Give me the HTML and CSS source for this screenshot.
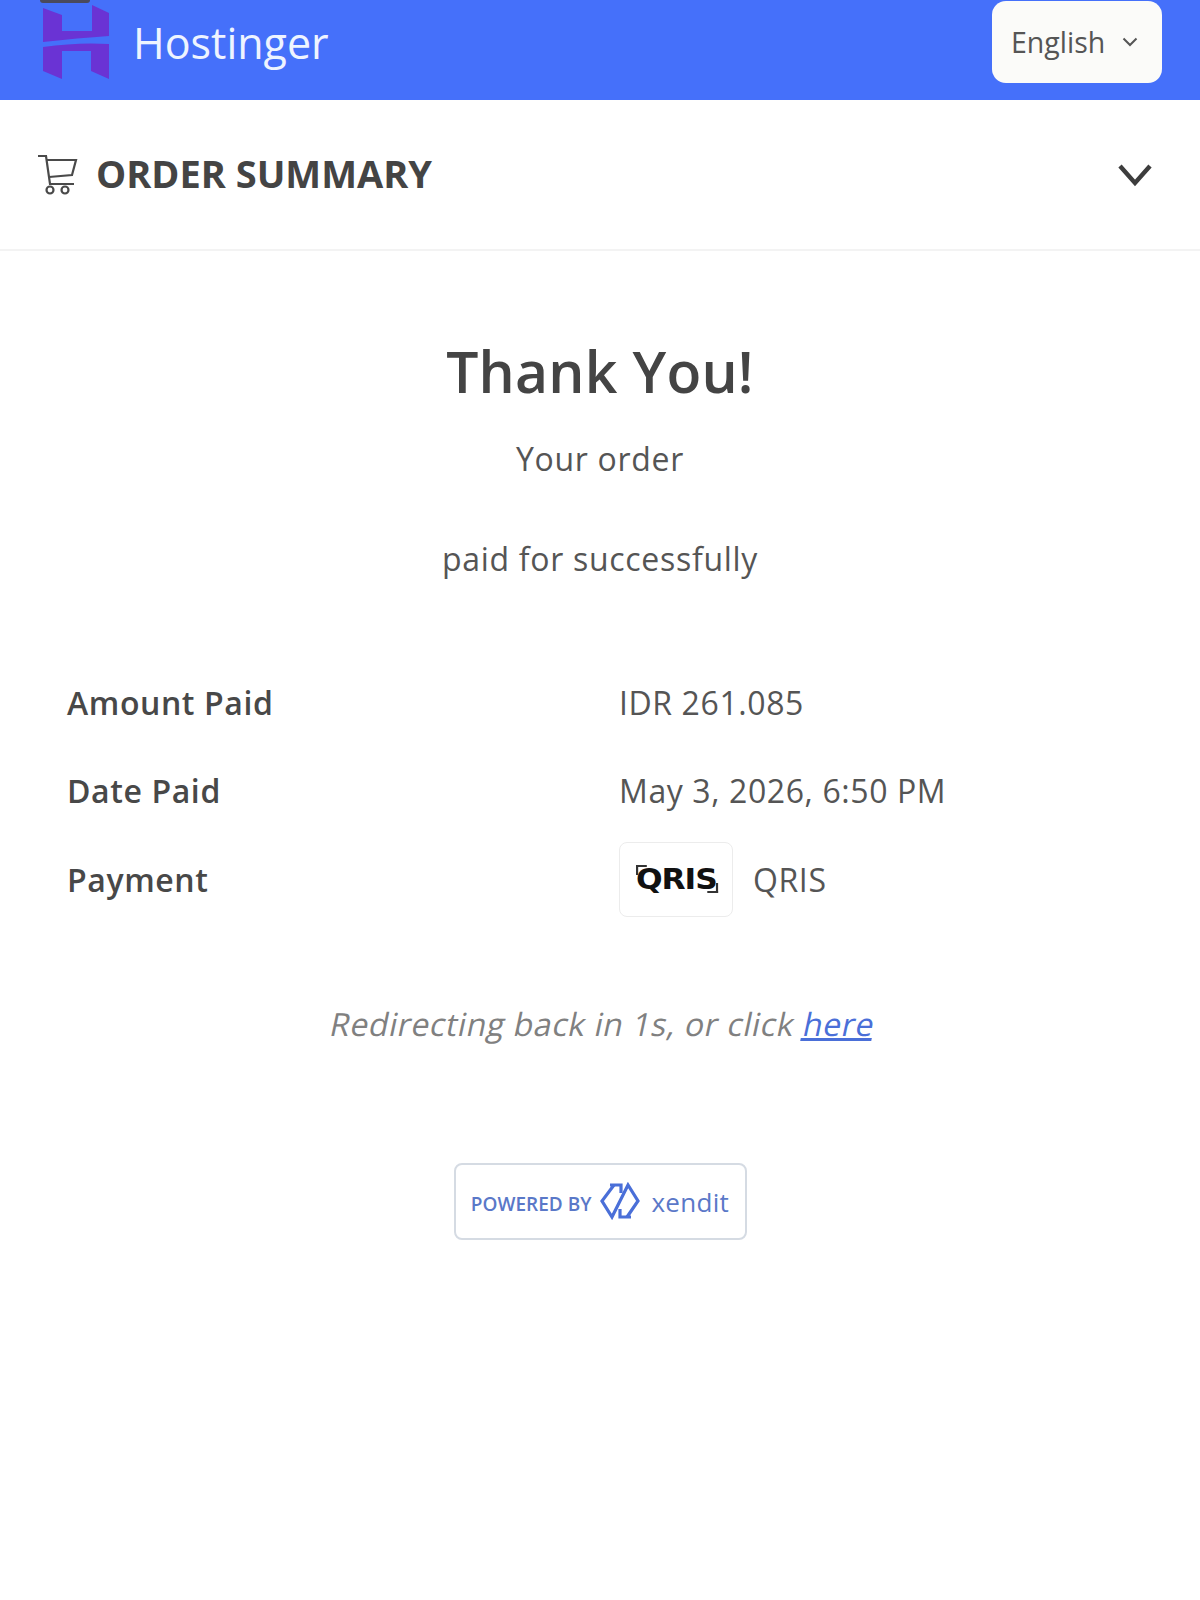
FILE: index.html
```html
<!DOCTYPE html>
<html lang="en">
<head>
    <meta charset="UTF-8">
    <meta name="viewport" content="width=device-width, initial-scale=1.0">
    <title>Thank You</title>
    <link rel="stylesheet" href="styles.css">
</head>
<body>
    <div class="header">
        <div class="camera-dot"></div>
        <div class="brand">
            <svg class="brand-logo" viewBox="0 0 66 74" width="66" height="74">
                <path d="M0 3 L19 10 V26 H49 V0 L66 8 V31 Q35 33 0 37 Z" fill="#6a33d4"/>
                <path d="M0 42 Q35 37 66 39 V74 L48 66 V46 H19 V74 L0 66 Z" fill="#6a33d4"/>
            </svg>
            <span class="brand-name">Hostinger</span>
        </div>
        <div class="lang-select">
            <span>English</span>
            <svg viewBox="0 0 16 10" width="16" height="10">
                <path d="M1.5 1.5 L8 8 L14.5 1.5" fill="none" stroke="#555" stroke-width="2"/>
            </svg>
        </div>
    </div>

    <div class="summary-bar">
        <div class="summary-title">
            <svg class="cart-icon" viewBox="0 0 40 40" width="40" height="40">
                <g fill="none" stroke="#4a4a4a" stroke-width="2.2">
                    <path d="M0 1 H8 L12 29 H36"/>
                    <path d="M8 5 H38 L34 20 L11 22"/>
                    <circle cx="12" cy="35" r="3.5"/>
                    <circle cx="27" cy="35" r="3.5"/>
                </g>
            </svg>
            <span>ORDER SUMMARY</span>
        </div>
        <svg viewBox="0 0 34 24" width="34" height="24">
            <path d="M2 3 L17 20 L32 3" fill="none" stroke="#3d3d3d" stroke-width="4.4"/>
        </svg>
    </div>

    <div class="content">
        <h1>Thank You!</h1>
        <p class="status">Your order</p>
        <p class="status">paid for successfully</p>

        <div class="details">
            <div class="detail-label">Amount Paid</div>
            <div class="detail-value">IDR 261.085</div>
            <div class="detail-label">Date Paid</div>
            <div class="detail-value">May 3, 2026, 6:50 PM</div>
            <div class="detail-label">Payment</div>
            <div class="detail-value payment">
                <div class="qris-box"><span class="qris-logo">QRIS</span></div>
                <span>QRIS</span>
            </div>
        </div>

        <p class="redirect">Redirecting back in 1s, or click <a href="#">here</a></p>

        <div class="powered">
            <span class="powered-by">POWERED BY</span>
            <svg viewBox="0 0 40 38" width="40" height="38">
                <g fill="none" stroke="#4a6fd8" stroke-width="3.2">
                    <path d="M14 3 L2 19 L12 35 L28 3 L38 19 L27 35"/>
                    <path d="M10 3 H21 V11"/>
                    <path d="M31 35 H20 V27"/>
                </g>
            </svg>
            <span class="xendit">xendit</span>
        </div>
    </div>
</body>
</html>
```

FILE: styles.css
```css
* {
    margin: 0;
    padding: 0;
    box-sizing: border-box;
}

body {
    font-family: 'Open Sans', 'Liberation Sans', sans-serif;
    background: #ffffff;
    color: #444444;
    min-height: 100vh;
}

.header {
    position: relative;
    height: 100px;
    background: #4570fa;
    display: flex;
    align-items: center;
    justify-content: space-between;
    padding: 0 38px 16px 43px;
}

.camera-dot {
    position: absolute;
    top: 0;
    left: 40px;
    width: 50px;
    height: 3px;
    border-radius: 0 0 6px 6px;
    background: #4a4a5c;
}

.brand {
    display: flex;
    align-items: center;
    gap: 24px;
}

.brand-name {
    font-size: 43px;
    color: #eef4ff;
}

.lang-select {
    width: 170px;
    height: 82px;
    background: #fbfbf9;
    border-radius: 14px;
    display: flex;
    align-items: center;
    justify-content: space-between;
    padding: 0 24px 0 19px;
    font-size: 28.5px;
    color: #555555;
}

.summary-bar {
    height: 151px;
    border-bottom: 2px solid #f3f3f3;
    display: flex;
    align-items: center;
    justify-content: space-between;
    padding: 0 48px 0 38px;
}

.summary-title {
    display: flex;
    align-items: center;
    gap: 18px;
    font-size: 38px;
    font-weight: 700;
    color: #444444;
}

.summary-title span {
    padding-bottom: 4px;
}

.content {
    display: flex;
    flex-direction: column;
    align-items: center;
}

h1 {
    margin-top: 82px;
    font-size: 57px;
    font-weight: 600;
    letter-spacing: 0.2px;
    line-height: 76px;
    color: #444444;
}

.status {
    font-size: 32px;
    letter-spacing: 0.7px;
    line-height: 44px;
    margin-top: 28px;
    color: #555555;
}

.status + .status {
    margin-top: 56px;
}

.details {
    width: 100%;
    margin-top: 77px;
    padding-left: 67px;
    display: grid;
    grid-template-columns: 552px 1fr;
    grid-auto-rows: 88.5px;
    align-items: center;
    font-size: 32px;
    letter-spacing: 0.6px;
}

.detail-label {
    font-weight: 600;
    color: #484848;
}

.detail-value {
    color: #555555;
}

.payment {
    display: flex;
    align-items: center;
    gap: 20px;
}

.qris-box {
    width: 114px;
    height: 75px;
    border: 1px solid #ececec;
    border-radius: 8px;
    display: flex;
    align-items: center;
    justify-content: center;
}

.qris-logo {
    position: relative;
    font-family: 'DejaVu Sans', sans-serif;
    font-size: 29px;
    font-weight: 700;
    line-height: 30px;
    color: #111111;
    letter-spacing: -1px;
    transform: scaleX(1.08);
}

/* small corner marks on the logo */
.qris-logo::before,
.qris-logo::after {
    content: "";
    position: absolute;
    width: 8px;
    height: 8px;
    border: 0 solid #333333;
}

.qris-logo::before {
    top: 1px;
    left: 0;
    border-width: 2px 0 0 2px;
}

.qris-logo::after {
    right: -1px;
    bottom: 1px;
    border-width: 0 2px 2px 0;
}

/* the reference slants the upright face instead of using the true italic */
.redirect {
    margin-top: 78px;
    padding-left: 6px;
    font-size: 32px;
    letter-spacing: 0.6px;
    color: #808080;
    transform: skewX(-12deg);
}

.redirect a {
    color: #4a6fd8;
}

.powered {
    margin-top: 118px;
    width: 293px;
    height: 77px;
    border: 2px solid #d5dbe3;
    border-radius: 8px;
    display: flex;
    align-items: center;
    justify-content: center;
    gap: 9px;
}

.powered-by {
    padding-top: 5px;
    font-size: 19px;
    font-weight: 600;
    color: #5a78c8;
}

.xendit {
    padding-top: 2px;
    margin-left: 2px;
    font-size: 26px;
    letter-spacing: 0.3px;
    color: #5a78c8;
}
```
